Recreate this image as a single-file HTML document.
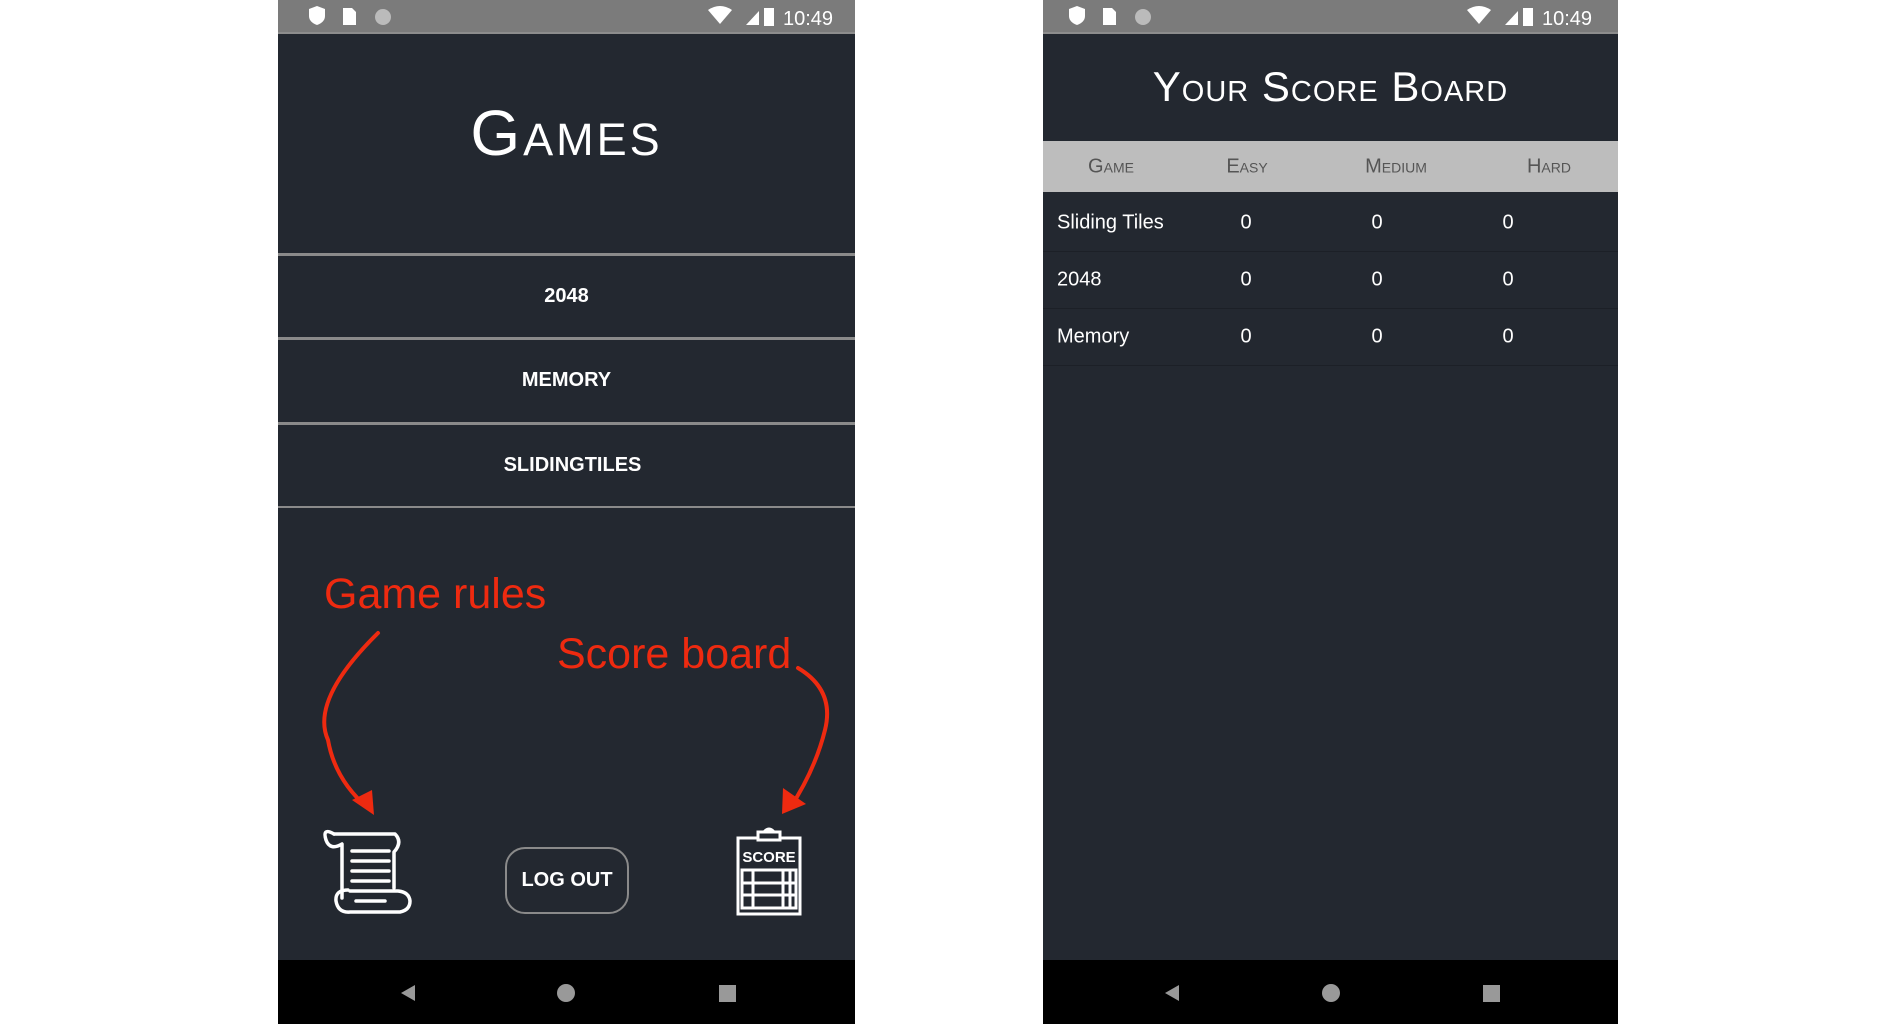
<!DOCTYPE html>
<html><head><meta charset="utf-8"><style>
*{margin:0;padding:0;box-sizing:border-box}
body{width:1900px;height:1024px;background:#fff;position:relative;overflow:hidden;font-family:"Liberation Sans",sans-serif}
.ph{position:absolute;top:0;height:1024px;background:#232830}
.sb{position:absolute;left:0;right:0;top:0;height:34px;background:#7b7b7b;border-bottom:2px solid #8d8d8d}
.nav{position:absolute;left:0;right:0;bottom:0;height:64px;background:#000}
.t{position:absolute;color:#fff;white-space:nowrap}
.line{position:absolute;left:0;right:0;height:3px;background:#8a8a8a}
.btn{position:absolute;left:0;right:0;text-align:center;color:#fff;font-weight:bold;font-size:20px}
.title{font-family:"Liberation Sans Narrow","Liberation Sans",sans-serif;font-variant:small-caps;letter-spacing:3px;text-align:center;left:0;right:0}
.red{position:absolute;color:#ee2a10;font-size:43px;white-space:nowrap;font-family:"Liberation Sans",sans-serif}
.row{position:absolute;left:0;right:0;height:57px;border-bottom:1px solid #1c2027;color:#fff;font-size:20px}
.row span,.hd span{position:absolute;top:50%;transform:translate(-50%,-50%)}
.row span.l{transform:translateY(-50%)}
.hd{position:absolute;left:0;right:0;top:141px;height:51px;background:#bdbdbd;color:#555;font-size:20px;font-variant:small-caps;font-family:"Liberation Sans Narrow","Liberation Sans",sans-serif}
</style></head><body>

<!-- LEFT PHONE -->
<div class="ph" style="left:278px;width:577px">
  <div class="sb">
    <svg width="577" height="34" style="position:absolute;left:0;top:0">
      <path d="M31 9 l8 -3 l8 3 v7 q0 6 -8 9 q-8 -3 -8 -9z" fill="#fff"/>
      <path d="M65 8 h9 l4 4 v13 h-13z" fill="#fff"/>
      <circle cx="105" cy="17" r="8" fill="#bbb"/>
      <path d="M430 10 q12 -8 24 0 l-12 14z" fill="#fff"/>
      <path d="M468 25 l13 -14 v14z" fill="#fff"/>
      <rect x="486" y="8" width="10" height="18" fill="#fff"/>
      <text x="505" y="25" fill="#fff" font-size="20" font-family="Liberation Sans">10:49</text>
    </svg>
  </div>
  <div class="t title" style="top:98px;font-size:64px;line-height:70px">Games</div>
  <div class="line" style="top:253px"></div>
  <div class="btn" style="top:285px">2048</div>
  <div class="line" style="top:337px"></div>
  <div class="btn" style="top:369px">MEMORY</div>
  <div class="line" style="top:422px"></div>
  <div class="btn" style="top:454px;left:12px">SLIDINGTILES</div>
  <div class="line" style="top:506px;height:2px"></div>
  <div style="position:absolute;left:227px;top:847px;width:124px;height:67px;border:2px solid #8a8a8a;border-radius:20px;color:#fff;font-weight:bold;font-size:20px;text-align:center;line-height:63px">LOG OUT</div>
  <div class="nav">
    <svg width="577" height="64"><path d="M137 25 l-14 8 l14 8z" fill="#999"/><circle cx="288" cy="33" r="9" fill="#999"/><rect x="441" y="25" width="17" height="17" fill="#999"/></svg>
  </div>
</div>

<!-- RIGHT PHONE -->
<div class="ph" style="left:1043px;width:575px">
  <div class="sb">
    <svg width="575" height="34" style="position:absolute;left:0;top:0">
      <path d="M26 9 l8 -3 l8 3 v7 q0 6 -8 9 q-8 -3 -8 -9z" fill="#fff"/>
      <path d="M60 8 h9 l4 4 v13 h-13z" fill="#fff"/>
      <circle cx="100" cy="17" r="8" fill="#bbb"/>
      <path d="M424 10 q12 -8 24 0 l-12 14z" fill="#fff"/>
      <path d="M462 25 l13 -14 v14z" fill="#fff"/>
      <rect x="480" y="8" width="10" height="18" fill="#fff"/>
      <text x="499" y="25" fill="#fff" font-size="20" font-family="Liberation Sans">10:49</text>
    </svg>
  </div>
  <div class="t title" style="top:62px;font-size:42px;line-height:50px;letter-spacing:1px">Your Score Board</div>
  <div class="hd"><span style="left:68px">Game</span><span style="left:204px">Easy</span><span style="left:353px">Medium</span><span style="left:506px">Hard</span></div>
  <div class="row" style="top:195px"><span class="l" style="left:14px">Sliding Tiles</span><span style="left:203px">0</span><span style="left:334px">0</span><span style="left:465px">0</span></div>
  <div class="row" style="top:252px"><span class="l" style="left:14px">2048</span><span style="left:203px">0</span><span style="left:334px">0</span><span style="left:465px">0</span></div>
  <div class="row" style="top:309px"><span class="l" style="left:14px">Memory</span><span style="left:203px">0</span><span style="left:334px">0</span><span style="left:465px">0</span></div>
  <div class="nav">
    <svg width="575" height="64"><path d="M136 25 l-14 8 l14 8z" fill="#999"/><circle cx="288" cy="33" r="9" fill="#999"/><rect x="440" y="25" width="17" height="17" fill="#999"/></svg>
  </div>
</div>

<div class="red" style="left:324px;top:570px">Game rules</div>
<div class="red" style="left:557px;top:630px">Score board</div>

<svg width="1900" height="1024" style="position:absolute;left:0;top:0">
  <g fill="none" stroke="#ee2a10" stroke-width="4" stroke-linecap="round">
    <path d="M378 633 Q310 700 328 740 Q335 780 368 808"/>
    <path d="M798 668 Q835 690 825 730 Q815 770 790 808"/>
  </g>
  <path d="M352 800 L374 815 L372 790z" fill="#ee2a10"/>
  <path d="M783 788 L782 814 L806 804z" fill="#ee2a10"/>
  <!-- scroll icon -->
  <g fill="none" stroke="#fff" stroke-width="3.5" stroke-linecap="round" stroke-linejoin="round">
    <path d="M334 834 Q322 827 326 840 Q330 851 342 844 L342 898"/>
    <path d="M334 834 L395 834 Q403 842 394 852 L394 888"/>
    <path d="M348 890 Q335 890 336 901 Q338 913 350 912 L400 912 Q410 910 410 901 Q409 892 398 891 L350 891"/>
    <path d="M352 851 H389 M352 861 H389 M352 871 H389 M352 881 H389"/>
    <path d="M356 901 H385"/>
  </g>
  <!-- score icon -->
  <g fill="none" stroke="#fff" stroke-width="3">
    <rect x="738" y="838" width="62" height="76"/>
    <rect x="758" y="832" width="22" height="8" fill="#232830"/>
    <path d="M764 832 q5 -6 10 0"/>
    <rect x="742" y="870" width="54" height="38"/>
    <path d="M742 883 H796 M742 895 H796 M753 870 V908 M783 870 V908 M790 870 V908"/>
  </g>
  <text x="769" y="862" fill="#fff" font-size="15" font-weight="bold" text-anchor="middle" font-family="Liberation Sans">SCORE</text>
</svg>
</body></html>
